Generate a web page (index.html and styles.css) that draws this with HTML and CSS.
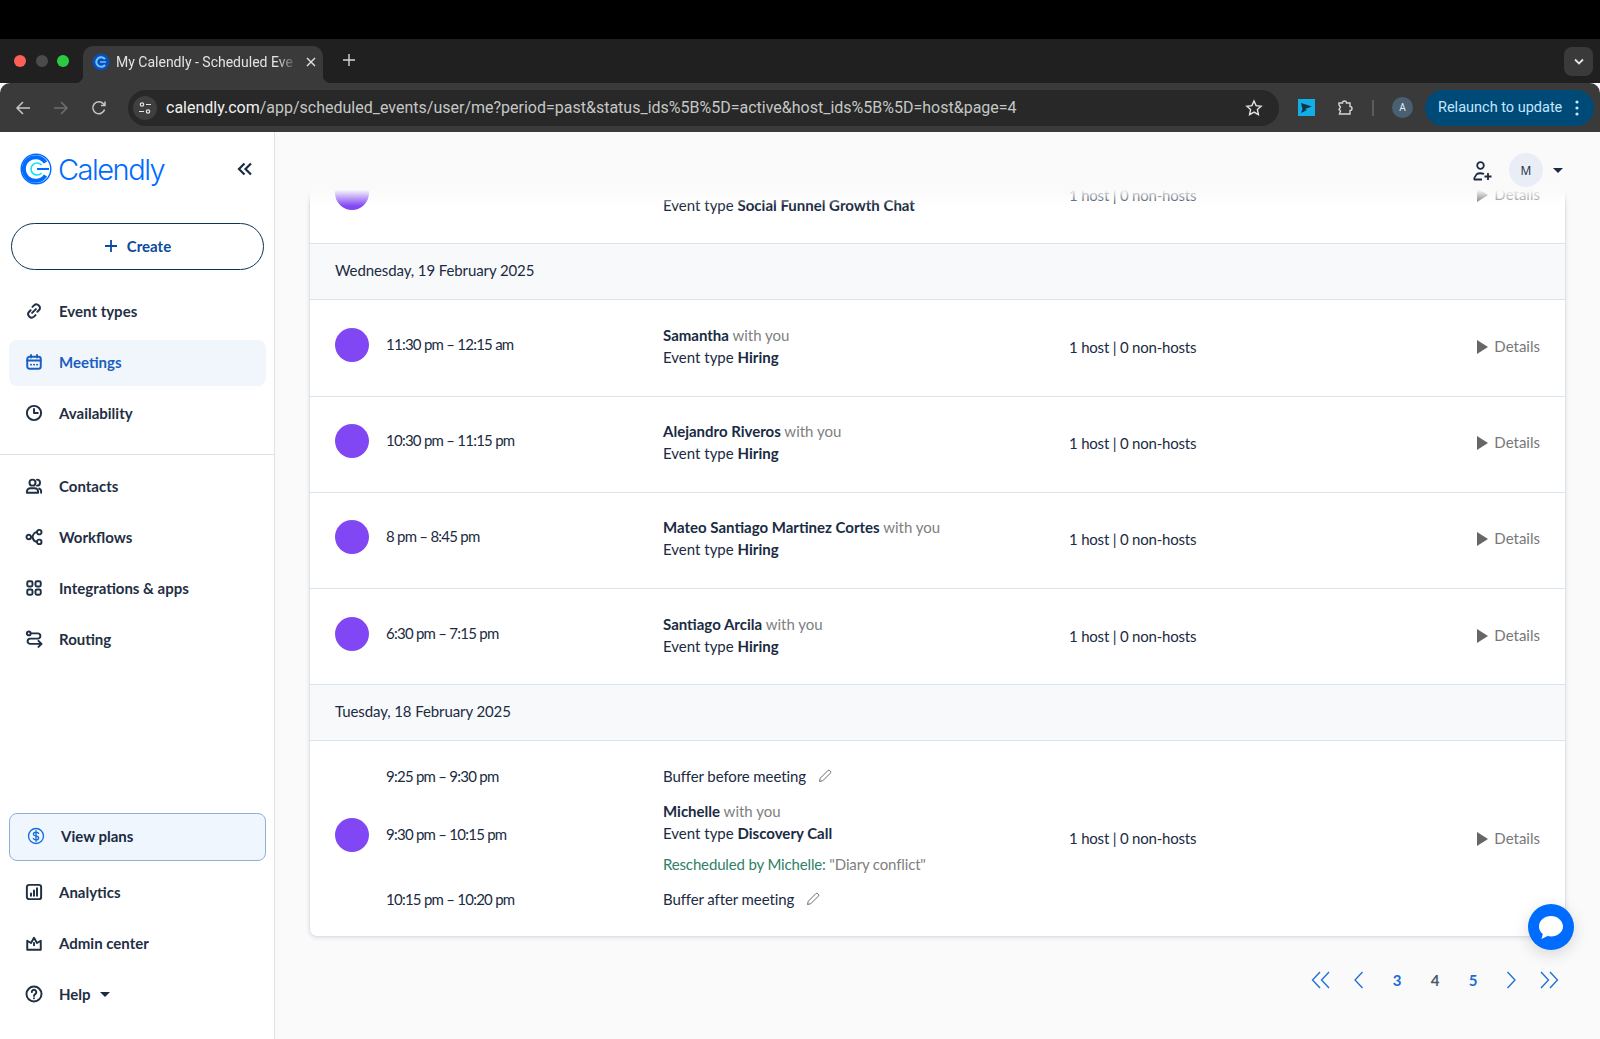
FILE: index.html
```html
<!DOCTYPE html>
<html lang="en">
<head>
  <meta charset="utf-8">
  <title>My Calendly - Scheduled Events</title>
  <link rel="stylesheet" href="styles.css">
</head>
<body>
  <!-- browser window -->
  <div class="topblack"></div>
  <div class="tabstrip">
    <div class="lights">
      <span class="light light--red"></span>
      <span class="light light--grey"></span>
      <span class="light light--green"></span>
    </div>
    <div class="tab">
      <svg class="tab__icon" width="18" height="18" viewBox="0 0 18 18">
        <circle cx="9" cy="9" r="8.5" fill="#0a4fb8"/>
        <path d="M13 6.2a4.8 4.8 0 1 0 0 5.6" fill="none" stroke="#6ec6ff" stroke-width="2"/>
        <path d="M8 9h6" stroke="#6ec6ff" stroke-width="1.4"/>
      </svg>
      <span class="tab__title">My Calendly - Scheduled Eve</span>
      <svg class="tab__close" width="10" height="10" viewBox="0 0 10 10"><path d="M1 1l8 8M9 1l-8 8" stroke="#e3e3e3" stroke-width="1.4"/></svg>
    </div>
    <svg class="newtab" width="14" height="14" viewBox="0 0 14 14"><path d="M7 1v12M1 7h12" stroke="#d5d5d5" stroke-width="1.4"/></svg>
    <div class="tabmenu">
      <svg width="12" height="8" viewBox="0 0 12 8"><path d="M2 1.5l4 4 4-4" fill="none" stroke="#e3e3e3" stroke-width="1.8"/></svg>
    </div>
  </div>
  <div class="toolbar">
    <svg class="navbtn" width="16" height="16" viewBox="0 0 16 16"><path d="M15 8H2M8 2L2 8l6 6" fill="none" stroke="#c4c7c5" stroke-width="1.5"/></svg>
    <svg class="navbtn" width="16" height="16" viewBox="0 0 16 16"><path d="M1 8h13M8 2l6 6-6 6" fill="none" stroke="#6f6f6f" stroke-width="1.5"/></svg>
    <svg class="navbtn" width="16" height="16" viewBox="0 0 16 16"><path d="M13.6 9.5A6 6 0 1 1 12.4 3.8L14 5.4M14 1.5v4h-4" fill="none" stroke="#c4c7c5" stroke-width="1.5"/></svg>
    <div class="omnibox">
      <span class="omnibox__tune">
        <svg width="14" height="14" viewBox="0 0 14 14"><circle cx="4" cy="3.5" r="1.7" fill="none" stroke="#e3e3e3" stroke-width="1.2"/><path d="M8 3.5h5M1 10.5h5" stroke="#e3e3e3" stroke-width="1.2"/><circle cx="10" cy="10.5" r="1.7" fill="none" stroke="#e3e3e3" stroke-width="1.2"/></svg>
      </span>
      <span class="omnibox__url"><b>calendly.com</b>/app/scheduled_events/user/me?period=past&amp;status_ids%5B%5D=active&amp;host_ids%5B%5D=host&amp;page=4</span>
      <svg class="omnibox__star" width="18" height="18" viewBox="0 0 18 18"><path d="M9 2l2.100 4.600 5 .6-3.700 3.400 1 5L9 13.100l-4.400 2.500 1-5L1.900 7.200l5-.6z" fill="none" stroke="#e3e3e3" stroke-width="1.4"/></svg>
    </div>
    <svg class="ext" width="17" height="17" viewBox="0 0 17 17"><rect width="17" height="17" fill="#12aee8"/><path d="M3 4l11 3.500-7 2.500 2 1-6 3 1.500-4z" fill="#12324a"/></svg>
    <svg class="puzzle" width="18" height="18" viewBox="0 0 18 18"><path d="M3 4h3.500a2 2 0 0 1 4 0H14v3.500a2 2 0 0 1 0 4V15H3.500l1-3-1.500-1.500 1.500-2.500L3 6z" fill="none" stroke="#d5d5d5" stroke-width="1.4"/></svg>
    <span class="toolbar__sep"></span>
    <span class="profile">A</span>
    <div class="relaunch">
      <span>Relaunch to update</span>
      <svg width="4" height="16" viewBox="0 0 4 16"><circle cx="2" cy="2" r="1.6" fill="#c2e7ff"/><circle cx="2" cy="8" r="1.6" fill="#c2e7ff"/><circle cx="2" cy="14" r="1.6" fill="#c2e7ff"/></svg>
    </div>
  </div>

  <!-- calendly app -->
  <div class="app">
    <aside class="sidebar">
      <div class="brand">
        <svg width="32" height="32" viewBox="0 0 32 32">
          <circle cx="16" cy="16" r="14.8" fill="none" stroke="#006bff" stroke-width="1.4"/>
          <path d="M25.500 9.500a11.800 11.800 0 1 0 0 13" fill="none" stroke="#006bff" stroke-width="4"/>
          <path d="M21.500 12a6 6 0 1 0 0 8" fill="none" stroke="#0ae8f0" stroke-width="1.6"/>
          <path d="M17 16h12" stroke="#006bff" stroke-width="2"/>
        </svg>
        <span class="brand__name">Calendly</span>
        <svg class="brand__collapse" width="16" height="14" viewBox="0 0 16 14"><path d="M7.500 1.500L2 7l5.500 5.500M14 1.500L8.500 7l5.500 5.500" fill="none" stroke="#1a2b42" stroke-width="2.2"/></svg>
      </div>
      <button class="create">
        <svg width="14" height="14" viewBox="0 0 14 14"><path d="M7 1v12M1 7h12" stroke="#0b4a9e" stroke-width="1.8"/></svg>
        Create
      </button>
      <nav class="nav">
        <a class="nav__item">
          <svg class="nav__icon" viewBox="0 0 24 24"><path d="M10 6.500l2-2a4.600 4.600 0 0 1 6.500 6.500l-2 2M14 17.500l-2 2A4.600 4.600 0 0 1 5.500 13l2-2M9.500 14.500l5-5"/></svg>
          Event types
        </a>
        <a class="nav__item nav__item--active">
          <svg class="nav__icon" viewBox="0 0 24 24"><rect x="3" y="5" width="18" height="16" rx="3"/><path d="M3 10h18M8 2.500V6M16 2.500V6M8 15.500h.1M12 15.500h.1M16 15.500h.1"/></svg>
          Meetings
        </a>
        <a class="nav__item">
          <svg class="nav__icon" viewBox="0 0 24 24"><circle cx="12" cy="12" r="9.500"/><path d="M12 6.500V12h5"/></svg>
          Availability
        </a>
      </nav>
      <hr class="sidebar__line">
      <nav class="nav">
        <a class="nav__item">
          <svg class="nav__icon" viewBox="0 0 24 24"><circle cx="10" cy="7.500" r="4"/><path d="M2.500 21v-1.500A4.500 4.500 0 0 1 7 15h6a4.500 4.500 0 0 1 4.500 4.500V21zM16 3.500a4 4 0 0 1 0 8M19 15.500a4 4 0 0 1 2.500 4V21"/></svg>
          Contacts
        </a>
        <a class="nav__item">
          <svg class="nav__icon" viewBox="0 0 24 24"><circle cx="5" cy="12" r="3"/><rect x="16" y="2.500" width="6" height="6" rx="3"/><rect x="16" y="15.500" width="6" height="6" rx="3"/><path d="M8 12h2M16 5.500c-4 0-5 2-6 6.500 1 4.500 2 6.500 6 6.500"/></svg>
          Workflows
        </a>
        <a class="nav__item">
          <svg class="nav__icon" viewBox="0 0 24 24"><rect x="3" y="3" width="7" height="7" rx="2"/><rect x="14" y="3" width="7" height="7" rx="2"/><rect x="3" y="14" width="7" height="7" rx="2"/><rect x="14" y="14" width="7" height="7" rx="2"/></svg>
          Integrations &amp; apps
        </a>
        <a class="nav__item">
          <svg class="nav__icon" viewBox="0 0 24 24"><circle cx="5" cy="4.500" r="2.500"/><path d="M8 4.500h9a3.500 3.500 0 0 1 0 7H7a3.500 3.500 0 0 0 0 7h15M18 14.500l4 4-4 4"/></svg>
          Routing
        </a>
      </nav>
      <div class="sidebar__bottom">
        <a class="plans">
          <svg class="nav__icon plans__icon" viewBox="0 0 24 24"><circle cx="12" cy="12" r="10"/><path d="M15.500 8.500C15 7.300 13.800 7 12 7c-2 0-3.500.8-3.500 2.500 0 3.500 7 1.500 7 5 0 1.700-1.500 2.500-3.500 2.500-1.800 0-3-.4-3.500-1.700M12 5v14"/></svg>
          View plans
        </a>
        <nav class="nav">
          <a class="nav__item">
            <svg class="nav__icon" viewBox="0 0 24 24"><rect x="2.500" y="2.500" width="19" height="19" rx="3"/><path d="M8 17v-3M12 17V10M16 17V7"/></svg>
            Analytics
          </a>
          <a class="nav__item">
            <svg class="nav__icon" viewBox="0 0 24 24"><path d="M3 9l5 3 4-7 4 7 5-3v12H3zM12 12v3"/></svg>
            Admin center
          </a>
          <a class="nav__item">
            <svg class="nav__icon" viewBox="0 0 24 24"><circle cx="12" cy="12" r="10"/><path d="M9 9.500a3 3 0 1 1 4.500 2.600c-1 .6-1.500 1.100-1.500 2.400M12 17.500v.1"/></svg>
            Help
            <span class="caret"></span>
          </a>
        </nav>
      </div>
    </aside>

    <main class="main">
      <div class="topbar">
        <svg class="topbar__invite" width="22" height="22" viewBox="0 0 22 22"><circle cx="9.500" cy="5.500" r="3.300" fill="none" stroke="#1a2b42" stroke-width="1.8"/><path d="M3 19.500c0-2 1-3 3-5.500 1-1 5-1 7 0M3 19.500h8M17 13v7M13.500 16.500h7" fill="none" stroke="#1a2b42" stroke-width="1.8"/></svg>
        <span class="topbar__avatar">M</span>
        <span class="caret caret--top"></span>
      </div>

      <section class="card">
        <div class="row">
          <span class="dot"></span>
          <span class="time"></span>
          <div class="info">
            <p class="info__line">&nbsp;</p>
            <p class="info__line">Event type <b>Social Funnel Growth Chat</b></p>
          </div>
          <span class="hosts">1 host | 0 non-hosts</span>
          <a class="details"><i class="details__arrow"></i>Details</a>
        </div>

        <h2 class="dayhead">Wednesday, 19 February 2025</h2>
        <div class="row">
          <span class="dot"></span>
          <span class="time">11:30 pm – 12:15 am</span>
          <div class="info">
            <p class="info__line"><b>Samantha</b> <em>with you</em></p>
            <p class="info__line">Event type <b>Hiring</b></p>
          </div>
          <span class="hosts">1 host | 0 non-hosts</span>
          <a class="details"><i class="details__arrow"></i>Details</a>
        </div>
        <div class="row">
          <span class="dot"></span>
          <span class="time">10:30 pm – 11:15 pm</span>
          <div class="info">
            <p class="info__line"><b>Alejandro Riveros</b> <em>with you</em></p>
            <p class="info__line">Event type <b>Hiring</b></p>
          </div>
          <span class="hosts">1 host | 0 non-hosts</span>
          <a class="details"><i class="details__arrow"></i>Details</a>
        </div>
        <div class="row">
          <span class="dot"></span>
          <span class="time">8 pm – 8:45 pm</span>
          <div class="info">
            <p class="info__line"><b>Mateo Santiago Martinez Cortes</b> <em>with you</em></p>
            <p class="info__line">Event type <b>Hiring</b></p>
          </div>
          <span class="hosts">1 host | 0 non-hosts</span>
          <a class="details"><i class="details__arrow"></i>Details</a>
        </div>
        <div class="row">
          <span class="dot"></span>
          <span class="time">6:30 pm – 7:15 pm</span>
          <div class="info">
            <p class="info__line"><b>Santiago Arcila</b> <em>with you</em></p>
            <p class="info__line">Event type <b>Hiring</b></p>
          </div>
          <span class="hosts">1 host | 0 non-hosts</span>
          <a class="details"><i class="details__arrow"></i>Details</a>
        </div>

        <h2 class="dayhead">Tuesday, 18 February 2025</h2>
        <div class="row row--buffered">
          <span class="time buffer-time buffer-time--before">9:25 pm – 9:30 pm</span>
          <p class="buffer-label buffer-label--before">Buffer before meeting
            <svg class="pencil" width="14" height="14" viewBox="0 0 14 14"><path d="M1.500 12.500l.8-3.300L9.800 1.700a1.400 1.400 0 0 1 2 0l.5.500a1.400 1.400 0 0 1 0 2L4.800 11.700z"/></svg>
          </p>
          <span class="dot dot--mid"></span>
          <span class="time time--mid">9:30 pm – 10:15 pm</span>
          <div class="info info--mid">
            <p class="info__line"><b>Michelle</b> <em>with you</em></p>
            <p class="info__line">Event type <b>Discovery Call</b></p>
            <p class="info__note"><span>Rescheduled by Michelle:</span> "Diary conflict"</p>
          </div>
          <span class="hosts hosts--mid">1 host | 0 non-hosts</span>
          <a class="details details--mid"><i class="details__arrow"></i>Details</a>
          <span class="time buffer-time buffer-time--after">10:15 pm – 10:20 pm</span>
          <p class="buffer-label buffer-label--after">Buffer after meeting
            <svg class="pencil" width="14" height="14" viewBox="0 0 14 14"><path d="M1.500 12.500l.8-3.300L9.800 1.700a1.400 1.400 0 0 1 2 0l.5.500a1.400 1.400 0 0 1 0 2L4.800 11.700z"/></svg>
          </p>
        </div>
      </section>

      <div class="pager">
        <svg class="pager__arrow" viewBox="0 0 20 18"><path d="M9 1L1.500 9 9 17M18 1L10.500 9 18 17"/></svg>
        <svg class="pager__arrow" viewBox="0 0 20 18"><path d="M13.500 1L6 9l7.500 8"/></svg>
        <a class="pager__num">3</a>
        <a class="pager__num pager__num--current">4</a>
        <a class="pager__num">5</a>
        <svg class="pager__arrow" viewBox="0 0 20 18"><path d="M6.500 1L14 9l-7.500 8"/></svg>
        <svg class="pager__arrow" viewBox="0 0 20 18"><path d="M2 1l7.500 8L2 17M11 1l7.500 8-7.500 8"/></svg>
      </div>

      <div class="chat">
        <svg width="26" height="25" viewBox="0 0 26 25"><path d="M13 1C6.400 1 1 5.600 1 11.500c0 3.200 1.400 5.800 3.800 7.600L3.500 24l6-3c1.100.3 2.300.4 3.500.4 6.600 0 12-4.300 12-9.900S19.600 1 13 1z" fill="#fff"/></svg>
      </div>
    </main>
  </div>
</body>
</html>
```

FILE: styles.css
```css
* {
  box-sizing: border-box;
}

html, body {
  margin: 0;
  height: 1039px;
  overflow: hidden;
}

body {
  font-family: Lato, "Open Sans", sans-serif;
  font-size: 15px;
  color: #1a2b42;
  background: #fafafa;
  display: flex;
  flex-direction: column;
}

/* browser chrome */
.topblack {
  height: 39px;
  background: #000;
}

.tabstrip {
  height: 44px;
  background: #202020;
  display: flex;
  align-items: flex-end;
  padding: 0 7px 0 14px;
  font-family: Roboto, sans-serif;
}

.lights {
  display: flex;
  gap: 9.5px;
  align-self: center;
}

.light {
  width: 12px;
  height: 12px;
  border-radius: 50%;
}

.light--red { background: #fb5f57; }
.light--grey { background: #4b4b4b; }
.light--green { background: #2acb42; }

.tab {
  position: relative;
  width: 240px;
  height: 37px;
  margin-left: 14px;
  padding: 0 7px 6px 9px;
  background: #3a3a3a;
  border-radius: 10px 10px 0 0;
  display: flex;
  align-items: center;
  color: #e3e3e3;
  font-size: 14px;
}

/* the little curves where the tab meets the toolbar */
.tab::before,
.tab::after {
  content: '';
  position: absolute;
  bottom: 0;
  width: 8px;
  height: 8px;
}

.tab::before {
  left: -8px;
  background: radial-gradient(circle at 0 0, transparent 8px, #3a3a3a 8.5px);
}

.tab::after {
  right: -8px;
  background: radial-gradient(circle at 100% 0, transparent 8px, #3a3a3a 8.5px);
}

.tab__icon {
  flex: none;
  margin-right: 6px;
}

.tab__title {
  flex: 1;
  overflow: hidden;
  white-space: nowrap;
  -webkit-mask-image: linear-gradient(90deg, #000 88%, transparent);
  mask-image: linear-gradient(90deg, #000 88%, transparent);
}

.tab__close {
  flex: none;
  margin-left: 8px;
}

.newtab {
  margin: 0 0 16px 19px;
}

.tabmenu {
  width: 29px;
  height: 29px;
  margin: 0 0 7px auto;
  background: #3a3a3a;
  border-radius: 8px;
  display: flex;
  align-items: center;
  justify-content: center;
}

.toolbar {
  height: 49px;
  background: #3a3a3a;
  border-radius: 10px 10px 0 0;
  display: flex;
  align-items: center;
  padding: 0 6px 0 15px;
  font-family: Roboto, sans-serif;
}

.navbtn {
  flex: none;
  margin-right: 22px;
}

.omnibox {
  flex: none;
  width: 1151px;
  height: 36px;
  margin-left: -1px;
  padding: 0 16px 0 5px;
  background: #282828;
  border-radius: 18px;
  display: flex;
  align-items: center;
  color: #c4c7c5;
  font-size: 16px;
}

.omnibox__tune {
  width: 24px;
  height: 24px;
  border-radius: 50%;
  background: #3f3f3f;
  display: flex;
  align-items: center;
  justify-content: center;
  margin-right: 9px;
}

.omnibox__url {
  flex: 1;
  white-space: nowrap;
}

.omnibox__url b {
  font-weight: 400;
  color: #f1f1f1;
}

.ext {
  flex: none;
  margin-left: 19px;
}

.puzzle {
  flex: none;
  margin-left: 21px;
}

.toolbar__sep {
  width: 2px;
  height: 16px;
  margin-left: 18px;
  background: #5c5c5c;
}

.profile {
  width: 21px;
  height: 21px;
  margin-left: 18px;
  border-radius: 50%;
  background: #4a6072;
  color: #e6edf2;
  font-size: 10px;
  display: flex;
  align-items: center;
  justify-content: center;
}

.relaunch {
  width: 169px;
  height: 36px;
  margin-left: 12px;
  padding: 0 15px 0 13px;
  background: #004a77;
  border-radius: 18px;
  color: #c2e7ff;
  font-size: 14.5px;
  display: flex;
  align-items: center;
  justify-content: space-between;
}

/* app */
.app {
  flex: 1;
  display: flex;
  min-height: 0;
}

.sidebar {
  width: 275px;
  flex: none;
  background: #fff;
  border-right: 1px solid #dfe3e8;
  display: flex;
  flex-direction: column;
  padding: 0 8px 0 9px;
}

.brand {
  height: 76px;
  padding-bottom: 2px;
  display: flex;
  align-items: center;
  padding-left: 11px;
}

.brand__name {
  margin-left: 6px;
  color: #006bff;
  font-family: Inter, sans-serif;
  font-weight: 300;
  font-size: 29px;
  letter-spacing: -1.5px;
}

.brand__collapse {
  margin-left: auto;
  margin-right: 13px;
}

.create {
  width: 253px;
  height: 47px;
  margin: 15px 0 0 2px;
  padding-bottom: 3px;
  border: 1px solid #0b3558;
  border-radius: 24px;
  background: #fff;
  color: #0b4a9e;
  font: 700 15px Lato, sans-serif;
  display: flex;
  align-items: center;
  justify-content: center;
  gap: 9px;
}

.nav {
  display: flex;
  flex-direction: column;
  gap: 5px;
}

.create + .nav {
  margin-top: 19px;
}

.nav__item {
  height: 46px;
  padding: 0 0 2px 16px;
  border-radius: 8px;
  display: flex;
  align-items: center;
  font-weight: 700;
  font-size: 15px;
  color: #1f2f44;
}

.nav__item--active {
  background: #f1f6fd;
  color: #1a5fbf;
}

.nav__icon {
  width: 18px;
  height: 18px;
  margin-right: 16px;
  flex: none;
  fill: none;
  stroke: currentColor;
  stroke-width: 2.6;
  stroke-linecap: round;
  stroke-linejoin: round;
}

.sidebar__line {
  width: calc(100% + 17px);
  margin: 17px 0 9px -9px;
  border: 0;
  border-top: 1px solid #dfe3e8;
}

.sidebar__bottom {
  margin-top: auto;
  padding-bottom: 21px;
}

.plans {
  height: 48px;
  margin-bottom: 9px;
  padding: 0 0 2px 17px;
  background: #f0f6fe;
  border: 1px solid #8fb0d8;
  border-radius: 8px;
  display: flex;
  align-items: center;
  font-weight: 700;
  font-size: 15px;
  color: #1a2b42;
}

.plans__icon {
  color: #1a6dd8;
  stroke-width: 1.8;
}

.caret {
  width: 0;
  height: 0;
  margin-left: 9px;
  border: 5px solid transparent;
  border-top: 5px solid #1a2b42;
  border-bottom: 0;
}

/* main area */
.main {
  position: relative;
  flex: 1;
  min-width: 0;
  padding: 16px 34px 0 34px;
}

.topbar {
  position: absolute;
  top: 0;
  left: 0;
  right: 0;
  height: 74px;
  padding: 21px 37px 0 0;
  background: linear-gradient(#fafafa 78%, rgba(250, 250, 250, 0));
  display: flex;
  align-items: flex-start;
  justify-content: flex-end;
  z-index: 1;
}

.topbar__invite {
  margin-right: 16px;
  margin-top: 7px;
}

.topbar__avatar {
  width: 34px;
  height: 34px;
  border-radius: 50%;
  background: #e8edf6;
  font-size: 12px;
  font-family: "Open Sans", sans-serif;
  display: flex;
  align-items: center;
  justify-content: center;
}

.caret--top {
  margin: 15px 0 0 10px;
}

.card {
  background: #fff;
  border: 1px solid #dde3ea;
  border-top: 0;
  border-radius: 0 0 8px 8px;
  box-shadow: 0 1px 4px rgba(30, 50, 80, .12);
}

.row {
  display: grid;
  grid-template-columns: 51px 277px 406px 1fr auto;
  align-items: center;
  height: 96.25px;
  padding: 0 25px 4px 25px;
  border-bottom: 1px solid #dde3ea;
}

.row:last-child {
  border-bottom: 0;
}

.dayhead {
  height: 56px;
  margin: 0;
  padding: 0 0 4px 25px;
  display: flex;
  align-items: center;
  background: #f8f9fa;
  border-bottom: 1px solid #dde3ea;
  font-weight: 400;
  font-size: 15px;
  letter-spacing: -.1px;
}

.dot {
  width: 34px;
  height: 34px;
  margin-bottom: 2px;
  border-radius: 50%;
  background: #8247f5;
}

/* lato digits run wide against the reference */
.time {
  margin-bottom: 4px;
  white-space: nowrap;
  letter-spacing: -.75px;
}

.info__line {
  margin: 0;
  line-height: 22px;
}

.info__line b {
  font-weight: 700;
}

.info__line em {
  font-style: normal;
  color: #808080;
}

.info__note {
  margin: 10px 0 0;
  line-height: 20px;
  letter-spacing: -.15px;
  color: #808080;
}

.info__note span {
  color: #2f8069;
}

.hosts {
  margin-top: 2px;
  white-space: nowrap;
  letter-spacing: -.2px;
}

.details {
  display: flex;
  align-items: center;
  color: #777;
}

.details__arrow {
  width: 0;
  height: 0;
  margin: 2px 6px 0 0;
  border-left: 11px solid #666;
  border-top: 7px solid transparent;
  border-bottom: 7px solid transparent;
}

/* row with buffers before and after the meeting */
.row--buffered {
  height: 195px;
  padding-top: 25px;
  padding-bottom: 27px;
  grid-template-rows: 20px 1fr 20px;
}

.buffer-time {
  grid-column: 2;
  margin-bottom: 0;
  line-height: 20px;
}

.buffer-label {
  grid-column: 3;
  margin: 0;
  line-height: 20px;
  letter-spacing: -.1px;
  display: flex;
  align-items: center;
  gap: 12px;
}

.buffer-time--before, .buffer-label--before { grid-row: 1; }
.buffer-time--after, .buffer-label--after { grid-row: 3; }

.dot--mid, .time--mid, .info--mid, .hosts--mid, .details--mid {
  grid-row: 2;
}

.dot--mid { grid-column: 1; margin-bottom: 6px; }
.time--mid { grid-column: 2; margin-bottom: 8px; }
.info--mid { grid-column: 3; margin-bottom: 2px; }
.hosts--mid { grid-column: 4; margin-top: 1px; }
.details--mid { grid-column: 5; margin-top: 1px; }

.pencil {
  fill: none;
  stroke: #6b6b6b;
  stroke-width: 1;
}

.pager {
  display: flex;
  justify-content: flex-end;
  align-items: center;
  height: 86px;
  margin-right: -2px;
}

.pager__arrow {
  width: 20px;
  height: 18px;
  margin: 0 9px;
  fill: none;
  stroke: #1a6dd8;
  stroke-width: 1.3;
}

.pager__num {
  width: 38px;
  text-align: center;
  font-weight: 700;
  font-size: 15px;
  color: #1a6dd8;
}

.pager__num--current {
  color: #4a5a70;
}

.chat {
  position: absolute;
  left: 1253px;
  top: 772px;
  width: 46px;
  height: 46px;
  border-radius: 50%;
  background: #006bff;
  box-shadow: 0 4px 16px rgba(0, 0, 0, .15);
  display: flex;
  align-items: center;
  justify-content: center;
  z-index: 2;
}
```
